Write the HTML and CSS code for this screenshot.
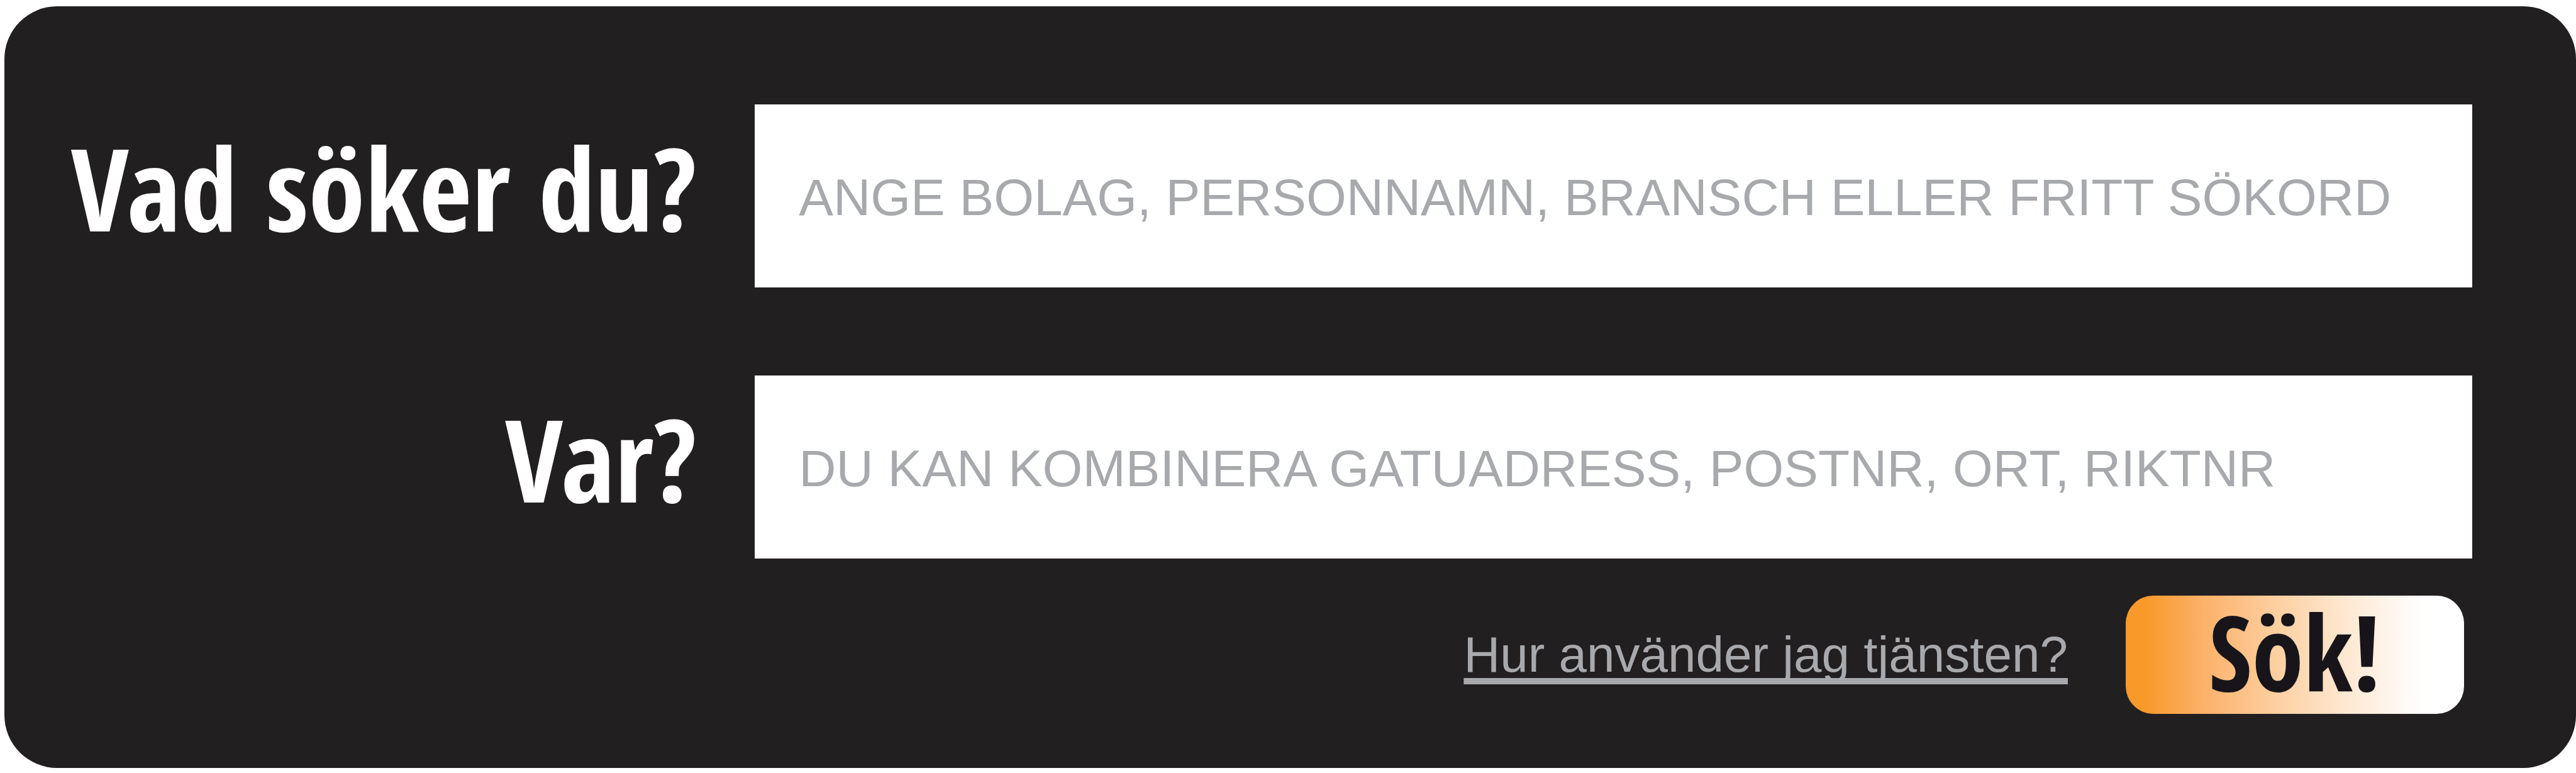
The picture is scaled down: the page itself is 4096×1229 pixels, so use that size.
FILE: index.html
```html
<!DOCTYPE html>
<html lang="sv">
<head>
<meta charset="utf-8">
<title>Sök</title>
<link rel="stylesheet" href="styles.css">
</head>
<body>
<form class="search">
  <div class="fields">
    <label class="label" for="what">Vad söker du?</label>
    <input class="field" id="what" type="text" placeholder="ANGE BOLAG, PERSONNAMN, BRANSCH ELLER FRITT SÖKORD">
    <label class="label" for="where">Var?</label>
    <input class="field" id="where" type="text" placeholder="DU KAN KOMBINERA GATUADRESS, POSTNR, ORT, RIKTNR">
  </div>
  <div class="actions">
    <a class="help" href="#">Hur använder jag tjänsten?</a>
    <button class="submit" type="submit">Sök!</button>
  </div>
</form>
</body>
</html>
```
FILE: styles.css
```css
* {
  box-sizing: border-box;
}

body {
  margin: 0;
  padding: 10px 0 9px 7px;
  background: #fff;
  font-family: "Liberation Sans", Arial, sans-serif;
}

.search {
  padding: 156px 165px 86px 106px;
  border-radius: 84px;
  background: #221f20;
}

.fields {
  display: grid;
  grid-template-columns: auto 1fr;
  align-items: center;
  gap: 140px 92px;
}

.label {
  padding-bottom: 30px;
  color: #fff;
  font: bold 182px/240px "Open Sans Condensed", "Open Sans", sans-serif;
  text-align: right;
  white-space: nowrap;
}

.field {
  width: 100%;
  min-width: 0;
  height: 291px;
  padding: 4px 70px 0;
  border: 0;
  border-radius: 0;
  background: #fff;
  color: #221f20;
  font: 82px "Liberation Sans", Arial, sans-serif;
}

.field::placeholder {
  color: #a7a9ac;
  opacity: 1;
}

.actions {
  display: flex;
  justify-content: flex-end;
  align-items: center;
  gap: 92px;
  margin-top: 59px;
  padding-right: 13px;
}

.help {
  color: #a7a9ac;
  font-size: 80px;
  text-decoration: underline;
  text-decoration-thickness: 10px;
  text-underline-offset: 10px;
  text-decoration-skip-ink: none;
}

.submit {
  width: 538px;
  height: 188px;
  padding: 0 0 12px;
  border: 0;
  border-radius: 44px;
  background: linear-gradient(90deg, #f8992a 6%, #fbb066 22%, #fdd0a2 45%, #fee9d3 66%, #fff 88%);
  color: #17151a;
  font: bold 166px/176px "Open Sans Condensed", "Open Sans", sans-serif;
}
```
